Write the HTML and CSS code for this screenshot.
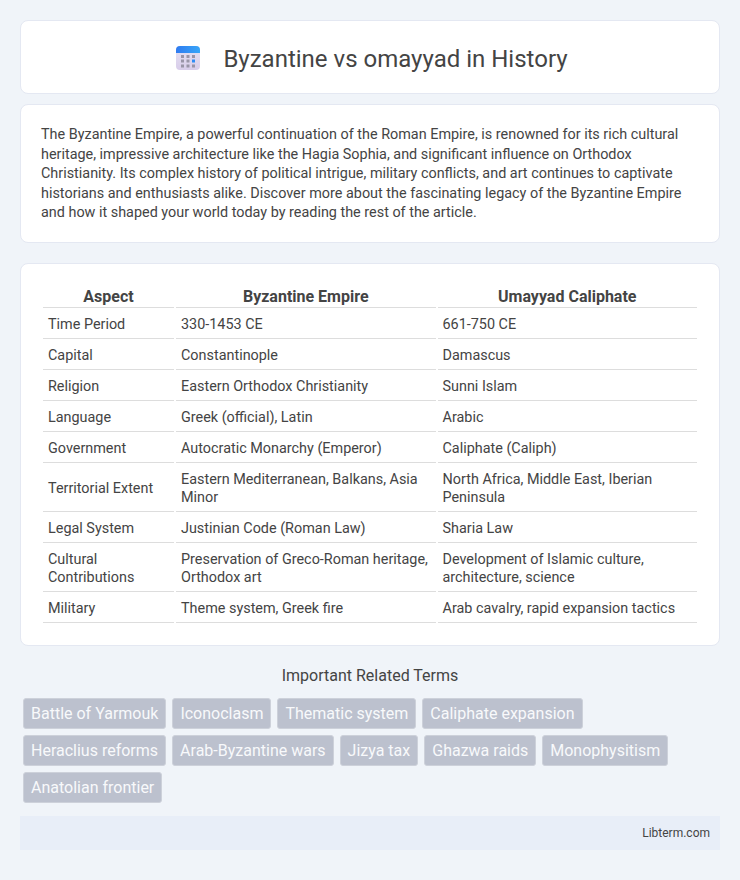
FILE: index.html
```html
<!DOCTYPE html>
<html lang="en">
<head>
<meta charset="utf-8">
<title>Byzantine vs omayyad in History</title>
<link rel="stylesheet" href="styles.css">
</head>
<body>
<header class="card head">
  <svg class="logo" viewBox="0 0 24 24" width="24" height="24" aria-hidden="true">
    <defs>
      <linearGradient id="top" x1="0" y1="0" x2="1" y2="0"><stop offset="0" stop-color="#2f7bf0"/><stop offset="1" stop-color="#38a6f8"/></linearGradient>
      <linearGradient id="pg" x1="0" y1="0" x2="0" y2="1"><stop offset="0" stop-color="#e6e2f2"/><stop offset="1" stop-color="#d8cdea"/></linearGradient>
    </defs>
    <rect x="0" y="0" width="24" height="24" rx="4" fill="url(#pg)"/>
    <path d="M0 7V4a4 4 0 0 1 4-4h16a4 4 0 0 1 4 4v3z" fill="url(#top)"/>
    <g fill="#9a95a8">
      <rect x="5" y="9" width="3" height="3"/><rect x="10.5" y="9" width="3" height="3"/><rect x="16" y="9" width="3" height="3"/>
      <rect x="5" y="13.5" width="3" height="3"/><rect x="10.5" y="13.5" width="3" height="3"/>
      <rect x="5" y="18.5" width="3" height="3"/><rect x="10.5" y="18.5" width="3" height="3"/><rect x="16" y="18.5" width="3" height="3"/>
    </g>
    <rect x="16" y="13.5" width="3" height="3" fill="#2f8df5"/>
  </svg>
  <h1>Byzantine vs omayyad in History</h1>
</header>
<section class="card intro">
  <p>The Byzantine Empire, a powerful continuation of the Roman Empire, is renowned for its rich cultural heritage, impressive architecture like the Hagia Sophia, and significant influence on Orthodox Christianity. Its complex history of political intrigue, military conflicts, and art continues to captivate historians and enthusiasts alike. Discover more about the fascinating legacy of the Byzantine Empire and how it shaped your world today by reading the rest of the article.</p>
</section>
<section class="card compare">
  <table>
    <thead>
      <tr><th class="c1">Aspect</th><th class="c2">Byzantine Empire</th><th class="c3">Umayyad Caliphate</th></tr>
    </thead>
    <tbody>
      <tr><td>Time Period</td><td>330-1453 CE</td><td>661-750 CE</td></tr>
      <tr><td>Capital</td><td>Constantinople</td><td>Damascus</td></tr>
      <tr><td>Religion</td><td>Eastern Orthodox Christianity</td><td>Sunni Islam</td></tr>
      <tr><td>Language</td><td>Greek (official), Latin</td><td>Arabic</td></tr>
      <tr><td>Government</td><td>Autocratic Monarchy (Emperor)</td><td>Caliphate (Caliph)</td></tr>
      <tr><td>Territorial Extent</td><td>Eastern Mediterranean, Balkans, Asia Minor</td><td>North Africa, Middle East, Iberian Peninsula</td></tr>
      <tr><td>Legal System</td><td>Justinian Code (Roman Law)</td><td>Sharia Law</td></tr>
      <tr><td>Cultural Contributions</td><td>Preservation of Greco-Roman heritage, Orthodox art</td><td>Development of Islamic culture, architecture, science</td></tr>
      <tr><td>Military</td><td>Theme system, Greek fire</td><td>Arab cavalry, rapid expansion tactics</td></tr>
    </tbody>
  </table>
</section>
<section class="related">
  <h2>Important Related Terms</h2>
  <div class="tags">
    <span class="tag">Battle of Yarmouk</span>
    <span class="tag">Iconoclasm</span>
    <span class="tag">Thematic system</span>
    <span class="tag">Caliphate expansion</span>
    <span class="tag">Heraclius reforms</span>
    <span class="tag">Arab-Byzantine wars</span>
    <span class="tag">Jizya tax</span>
    <span class="tag">Ghazwa raids</span>
    <span class="tag">Monophysitism</span>
    <span class="tag">Anatolian frontier</span>
  </div>
</section>
<footer class="foot">Libterm.com</footer>
</body>
</html>
```
FILE: styles.css
```css
* { box-sizing: border-box; }
html, body { margin: 0; padding: 0; }
body {
  background: #f0f4f9;
  color: #444;
  font-family: Roboto, "Liberation Sans", sans-serif;
  font-size: 14px;
  padding: 20px 20px 0;
}
.card {
  background: #fff;
  border: 1px solid #e4e8f2;
  border-radius: 8px;
}
.head {
  height: 74px;
  display: flex;
  align-items: center;
  justify-content: center;
  gap: 23px;
  padding: 4px 0 0 4px;
  margin-bottom: 10px;
}
.logo { display: block; margin-bottom: 2px; }
h1 {
  margin: 0;
  font-size: 24px;
  font-weight: 400;
  line-height: 32px;
  color: #444;
}
.intro {
  padding: 20px 20px 19px;
  margin-bottom: 20px;
}
.intro p {
  margin: 0;
  font-size: 14.4px;
  line-height: 19.5px;
  color: #444;
}
.compare {
  padding: 20px 20px 22px;
  margin-bottom: 20px;
}
table {
  width: 100%;
  border-collapse: separate;
  border-spacing: 2px 0;
  table-layout: fixed;
}
.c1 { width: 131px; }
th, td {
  border-bottom: 1px solid #ddd;
}
th {
  font-size: 16px;
  font-weight: 700;
  line-height: 19px;
  padding: 3px 5px 1px;
  text-align: center;
}
td {
  font-size: 14.4px;
  line-height: 18px;
  padding: 8px 5px 4px;
  text-align: left;
}
.related { margin-bottom: 13px; }
h2 {
  margin: 0 0 13px;
  font-size: 16px;
  font-weight: 400;
  line-height: 19px;
  text-align: center;
  color: #444;
}
.tags {
  display: flex;
  flex-wrap: wrap;
  gap: 6px;
  padding: 0 3px;
}
.tag {
  background: #bcc1ce;
  border: 1px solid #cdd1da;
  border-radius: 3px;
  color: #f8f9fb;
  font-size: 16px;
  line-height: 19px;
  padding: 5px 7px;
}
.foot {
  background: #e8eef8;
  height: 34px;
  display: flex;
  align-items: center;
  justify-content: flex-end;
  padding: 0 10px;
  font-size: 12px;
  color: #444;
}
```
